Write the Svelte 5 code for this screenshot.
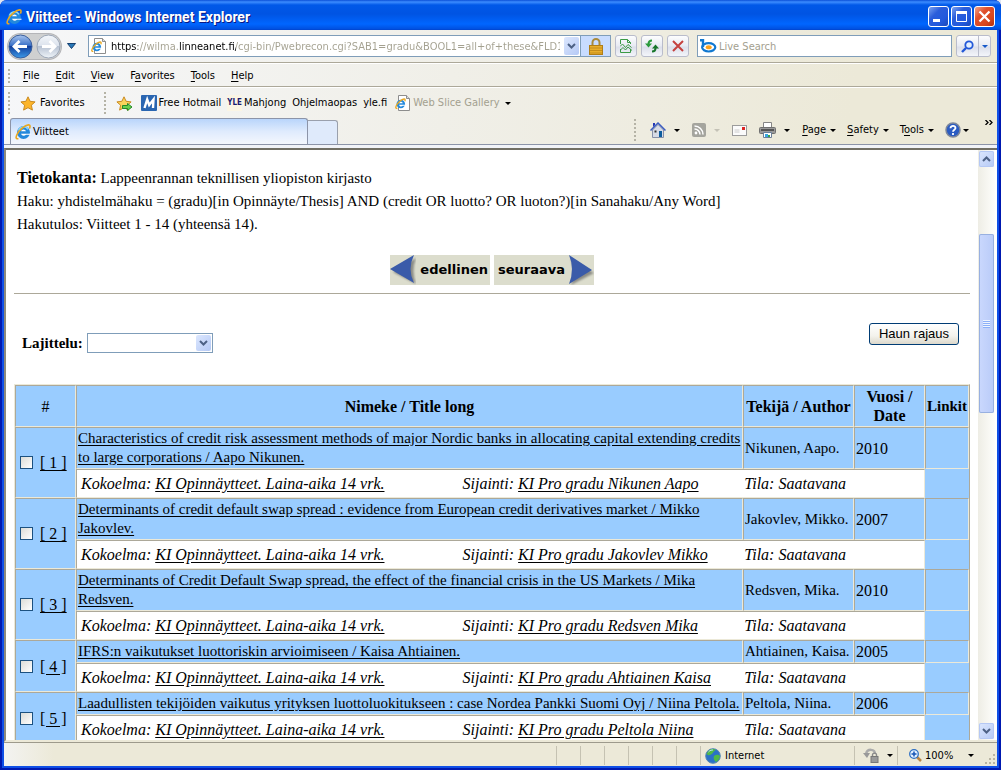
<script>
    let url = $state('https://wilma.linneanet.fi/cgi-bin/Pwebrecon.cgi?SAB1=gradu&BOOL1=all+of+these&FLD1=Opinnayte');
    let search = $state('');
    let sort = $state('');

    const menus = [
        ['', 'F', 'ile'],
        ['', 'E', 'dit'],
        ['', 'V', 'iew'],
        ['F', 'a', 'vorites'],
        ['', 'T', 'ools'],
        ['', 'H', 'elp']
    ];

    const commands = [
        ['', 'P', 'age'],
        ['', 'S', 'afety'],
        ['T', 'o', 'ols']
    ];

    const records = [
        {
            title: 'Characteristics of credit risk assessment methods of major Nordic banks in allocating capital extending credits to large corporations / Aapo Nikunen.',
            author: 'Nikunen, Aapo.',
            year: 2010,
            place: 'Nikunen Aapo'
        },
        {
            title: 'Determinants of credit default swap spread : evidence from European credit derivatives market / Mikko Jakovlev.',
            author: 'Jakovlev, Mikko.',
            year: 2007,
            place: 'Jakovlev Mikko'
        },
        {
            title: 'Determinants of Credit Default Swap spread, the effect of the financial crisis in the US Markets / Mika Redsven.',
            author: 'Redsven, Mika.',
            year: 2010,
            place: 'Redsven Mika'
        },
        {
            title: 'IFRS:n vaikutukset luottoriskin arvioimiseen / Kaisa Ahtiainen.',
            author: 'Ahtiainen, Kaisa.',
            year: 2005,
            place: 'Ahtiainen Kaisa'
        },
        {
            title: 'Laadullisten tekijöiden vaikutus yrityksen luottoluokitukseen : case Nordea Pankki Suomi Oyj / Niina Peltola.',
            author: 'Peltola, Niina.',
            year: 2006,
            place: 'Peltola Niina'
        }
    ];
</script>

{#snippet ie()}
    <svg width="16" height="16" viewBox="0 0 16 16" aria-hidden="true">
        <circle cx="8.500" cy="8.500" r="6.500" fill="#2389dc" />
        <path d="M3.500 6.500a5.300 5.300 0 0 1 9.500-1.200" fill="none" stroke="#8ad6fa" stroke-width="1.500" />
        <path d="M6 7.200a2.600 2.200 0 0 1 5 0z" fill="#fff" />
        <path d="M6 9.700h9.500v1H11c-1.500 1.500-4.300 1.300-5-1z" fill="#fff" />
        <path d="M3.400 14.600c-2.400.8-3-.8-1.300-4.200C4.200 6 9.800 1.200 13.400.9c2.100-.1 1.900 1.700 1 3.700" fill="none" stroke="#e9a820" stroke-width="1.600" />
    </svg>
{/snippet}

{#snippet iePage()}
    <svg width="16" height="16" viewBox="0 0 16 16" aria-hidden="true">
        <path d="M3.500.5h8l3 3v12h-11z" fill="#fff" stroke="#8d8d8d" />
        <path d="M11.500.5v3h3" fill="#ddd" stroke="#8d8d8d" />
        <circle cx="5.800" cy="9" r="4.300" fill="#2389dc" />
        <path d="M4 8.200a2 2 0 0 1 3.800 0zM4 9.700h6.500v1H7.800c-1.300 1.200-3.300 1-3.800-1z" fill="#fff" />
        <path d="M2.300 13.300c-1.600.5-2-.6-.9-2.800C3 7.500 6.500 4.300 9 4c1.400 0 1.300 1 .8 2.200" fill="none" stroke="#e9a820" stroke-width="1.300" />
    </svg>
{/snippet}

{#snippet caret(color)}
    <svg class="caret" width="6" height="3" viewBox="0 0 6 3" aria-hidden="true"><path d="M0 0h6L3 3z" fill={color} /></svg>
{/snippet}

{#snippet chevron()}
    <svg width="9" height="6" viewBox="0 0 9 6" aria-hidden="true"><path d="M1 1l3.500 3.500L8 1" fill="none" stroke="#4d6185" stroke-width="2" /></svg>
{/snippet}

{#snippet mnemonic(parts)}{parts[0]}<u>{parts[1]}</u>{parts[2]}{/snippet}

<div class="window">
    <header class="titlebar">
        {@render ie()}
        <h1>Viitteet - Windows Internet Explorer</h1>
        <button class="win" aria-label="Minimize"><svg width="19" height="19" viewBox="0 0 19 19"><path d="M4 13.500h7" stroke="#fff" stroke-width="3" /></svg></button>
        <button class="win" aria-label="Maximize"><svg width="19" height="19" viewBox="0 0 19 19"><path d="M4.500 5v9.500h10V5" fill="none" stroke="#fff" /><path d="M4 5.500h11" stroke="#fff" stroke-width="3" /></svg></button>
        <button class="win close" aria-label="Close"><svg width="19" height="19" viewBox="0 0 19 19"><path d="M4.500 4.500l10 10M14.500 4.500l-10 10" stroke="#fff" stroke-width="2.300" /></svg></button>
    </header>

    <div class="chrome">
        <div class="nav">
            <div class="travel">
                <button aria-label="Back">
                    <svg width="25" height="25" viewBox="0 0 25 25">
                        <defs>
                            <linearGradient id="back" x2="0" y2="1"><stop offset="0" stop-color="#a9c5ee" /><stop offset=".45" stop-color="#3c72c8" /><stop offset=".5" stop-color="#123f9c" /><stop offset="1" stop-color="#3c9ae8" /></linearGradient>
                        </defs>
                        <circle cx="12.500" cy="12.500" r="11.500" fill="url(#back)" stroke="#3b5f9c" />
                        <path d="M11.500 7l-5.500 5.500 5.500 5.500M7 12.500h12" fill="none" stroke="#fff" stroke-width="2.800" />
                    </svg>
                </button>
                <button aria-label="Forward">
                    <svg width="25" height="25" viewBox="0 0 25 25">
                        <defs>
                            <linearGradient id="fwd" x2="0" y2="1"><stop offset="0" stop-color="#f4f7fb" /><stop offset=".48" stop-color="#dbe2ec" /><stop offset=".5" stop-color="#b7c2d2" /><stop offset="1" stop-color="#f0f5fa" /></linearGradient>
                        </defs>
                        <circle cx="12.500" cy="12.500" r="11.500" fill="url(#fwd)" stroke="#9aa5b5" />
                        <path d="M13.500 7l5.500 5.500-5.500 5.500M18 12.500H6" fill="none" stroke="#fff" stroke-width="2.800" />
                    </svg>
                </button>
            </div>
            <button class="recent" aria-label="Recent pages"><svg width="9" height="6" viewBox="0 0 9 6"><path d="M.5.5h8l-4 5z" fill="#2878b8" stroke="#153f6e" /></svg></button>
            <div class="address">
                {@render iePage()}
                <input type="text" aria-label="Address" bind:value={url} />
                <button class="drop" aria-label="Show addresses">{@render chevron()}</button>
                <button class="lock" aria-label="Security report">
                    <svg width="14" height="17" viewBox="0 0 14 17">
                        <path d="M3.500 8V4.500a3.500 3.500 0 0 1 7 0V8" fill="none" stroke="#a98a3c" stroke-width="2" />
                        <rect x=".5" y="7.500" width="13" height="9" fill="#e8ae2c" stroke="#b07e18" />
                        <path d="M1 10h12M1 12.500h12M1 15h12" stroke="#c48d1c" />
                    </svg>
                </button>
            </div>
            <button class="tool" aria-label="Compatibility view">
                <svg width="12" height="14" viewBox="0 0 12 14"><path d="M.5 5V.5h7l3 3V5M.5 10v3.500h10V10M7.500.5v3h3" fill="none" stroke="#3b9a46" /><path d="M0 7.500L2.500 5l3 3.500L8 5.500l3.500 3M0 11.500l3-3 2.500 2.500 2.500-3 4 3.500" fill="none" stroke="#3b9a46" /></svg>
            </button>
            <button class="tool" aria-label="Refresh">
                <svg width="14" height="14" viewBox="0 0 14 14"><path d="M7 1.500C4.500 1.500 3.500 3 3.500 5" fill="none" stroke="#2b9a3c" stroke-width="2" /><path d="M0 4.500h7L3.500 8.500z" fill="#2b9a3c" /><path d="M7 12.500c2.500 0 3.500-1.500 3.500-3.500" fill="none" stroke="#16752a" stroke-width="2" /><path d="M7 9.500h7L10.500 5.500z" fill="#16752a" /></svg>
            </button>
            <button class="tool" aria-label="Stop">
                <svg width="12" height="12" viewBox="0 0 12 12"><path d="M1 1l10 10M11 1L1 11" stroke="#c5413f" stroke-width="2" /></svg>
            </button>
            <div class="search">
                <svg width="17" height="14" viewBox="0 0 17 14" aria-hidden="true"><path d="M0 1.200h3V8" fill="none" stroke="#1078d0" stroke-width="2.400" /><ellipse cx="8.700" cy="8.300" rx="6.600" ry="4.200" fill="none" stroke="#1078d0" stroke-width="2.200" /><ellipse cx="8.700" cy="8.300" rx="3" ry="2" fill="#f9a11b" /></svg>
                <input type="text" aria-label="Live Search" placeholder="Live Search" bind:value={search} />
            </div>
            <div class="go">
                <button aria-label="Search"><svg width="13" height="13" viewBox="0 0 13 13"><circle cx="8" cy="5" r="3.700" fill="#e3efff" stroke="#2358d8" stroke-width="1.800" /><path d="M5 8l-4 4" stroke="#2358d8" stroke-width="2.400" /></svg></button>
                <button aria-label="Search options">{@render caret('#1659c9')}</button>
            </div>
        </div>

        <nav class="menubar">
            <span class="grip"></span>
            {#each menus as menu}
                <button>{@render mnemonic(menu)}</button>
            {/each}
        </nav>

        <div class="favbar">
            <span class="grip"></span>
            <button class="fav">
                <svg width="16" height="15" viewBox="0 0 16 15"><path d="M8 .8l2.100 4.500 5 .6-3.700 3.300 1 4.900L8 11.700l-4.400 2.400 1-4.900L.9 5.900l5-.6z" fill="#fcb52b" stroke="#c98a22" /></svg>
                Favorites
            </button>
            <span class="grip"></span>
            <button aria-label="Add to Favorites Bar">
                <svg width="17" height="15" viewBox="0 0 17 15"><path d="M8 .8l2.100 4.500 5 .6-3.700 3.300 1 4.900L8 11.700l-4.400 2.400 1-4.900L.9 5.900l5-.6z" fill="#fcd35c" stroke="#c98a22" /><path d="M6.500 9.500h5v-2l4.500 3.500-4.500 3.500v-2h-5z" fill="#6bd04e" stroke="#258a2b" /></svg>
            </button>
            <a href="#hotmail">
                <svg width="16" height="16" viewBox="0 0 16 16" aria-hidden="true"><rect width="16" height="16" rx="1" fill="#2a66b1" /><path d="M3.500 13L6.200 4.500l2 5.500 4.300-5.500-.5 8.500" fill="none" stroke="#fff" stroke-width="2.400" /></svg>
                Free Hotmail
            </a>
            <a href="#mahjong"><b class="yle">YLE</b>Mahjong</a>
            <a href="#opas">Ohjelmaopas</a>
            <a href="#yle">yle.fi</a>
            <button class="slice">{@render iePage()}Web Slice Gallery {@render caret('#000')}</button>
        </div>

        <div class="tabrow">
            <button class="tab">{@render ie()}Viitteet</button>
            <button class="newtab" aria-label="New tab"></button>
            <div class="commands">
                <span class="grip"></span>
                <button class="home" aria-label="Home">
                    <svg width="16" height="16" viewBox="0 0 16 16"><path d="M2.500 8v7.500h11V8L8 2.500z" fill="#d7dbe6" stroke="#8790a8" /><path d="M.5 8.500L8 1l7.500 7.500" fill="none" stroke="#3c5cc0" stroke-width="1.500" /><path d="M3 1v4l2-2V1z" fill="#2336b4" /><path d="M9 9h3v6H9z" fill="#0d5c9e" /><path d="M4.500 8.500h2v2h-2z" fill="#333" /></svg>
                    {@render caret('#000')}
                </button>
                <button aria-label="Feeds">
                    <svg width="14" height="14" viewBox="0 0 14 14"><rect width="14" height="14" rx="2" fill="#a5a59e" /><circle cx="4" cy="10" r="1.400" fill="#fff" /><path d="M2.500 6a5.500 5.500 0 0 1 5.500 5.500M2.500 3A8.500 8.500 0 0 1 11 11.500" fill="none" stroke="#fff" stroke-width="1.500" /></svg>
                    {@render caret('#c4c2b6')}
                </button>
                <button aria-label="Read mail">
                    <svg width="15" height="11" viewBox="0 0 15 11"><rect x=".5" y=".5" width="14" height="10" fill="#fbfbfb" stroke="#9c9c9c" /><path d="M2.500 5h5M2.500 7h5" stroke="#ccc" /><path d="M10 2h3v3h-3z" fill="#dc2525" /></svg>
                </button>
                <button aria-label="Print">
                    <svg width="17" height="16" viewBox="0 0 17 16"><path d="M4.500 6V.5h8V6" fill="#fff" stroke="#858585" /><rect x=".5" y="5.500" width="16" height="6" rx="1" fill="#9a9a9a" stroke="#707070" /><path d="M2 8h13" stroke="#555" stroke-width="2" /><path d="M4.500 10.500h8v5h-8z" fill="#fff" stroke="#6b7f99" /><path d="M6 12h3v3H6z" fill="#3aa5e0" /><path d="M9 13h2v2H9z" fill="#39a347" /></svg>
                    {@render caret('#000')}
                </button>
                {#each commands as command}
                    <button class="word"><span>{@render mnemonic(command)}</span>{@render caret('#000')}</button>
                {/each}
                <button class="help" aria-label="Help">
                    <svg width="16" height="16" viewBox="0 0 16 16"><circle cx="8" cy="8" r="7" fill="#2b5cc2" stroke="#7d879b" stroke-width="1.500" /><path d="M5.500 6.200C5.500 3 10.700 3.200 10.500 6.200 10.300 7.800 8 7.700 8 9.800M8 11v2" fill="none" stroke="#fff" stroke-width="1.800" /></svg>
                    {@render caret('#000')}
                </button>
                <button class="more" aria-label="More commands"><svg width="8" height="5" viewBox="0 0 8 5"><path d="M.5 0L3 2.500.5 5M4.500 0L7 2.500 4.500 5" fill="none" stroke="#000" stroke-width="1.300" /></svg></button>
            </div>
        </div>
    </div>

    <div class="view">
        <main>
            <section class="info">
                <p><b>Tietokanta:</b> Lappeenrannan teknillisen yliopiston kirjasto</p>
                <p>Haku: yhdistelmähaku = (gradu)[in Opinnäyte/Thesis] AND (credit OR luotto? OR luoton?)[in Sanahaku/Any Word]</p>
                <p>Hakutulos: Viitteet 1 - 14 (yhteensä 14).</p>
            </section>

            <div class="pager">
                <a href="#prev">
                    <svg width="26" height="30" viewBox="0 0 26 30" aria-hidden="true"><path class="shade" d="M3 17L26 3q-5 13 0 26z" /><path d="M0 14L24 0q-7 14 0 28z" fill="#3a5ba9" /></svg>
                    edellinen
                </a>
                <a href="#next">
                    seuraava
                    <svg width="26" height="30" viewBox="0 0 26 30" aria-hidden="true"><path class="shade" d="M26 18L3 4q5 13 0 26z" /><path d="M24 15L1 0q6 14 0 29z" fill="#3a5ba9" /></svg>
                </a>
            </div>

            <hr />

            <form class="sorting">
                <label for="sort">Lajittelu:</label>
                <span class="select">
                    <select id="sort" bind:value={sort}>
                        <option value=""></option>
                        <option value="author">Tekijä</option>
                        <option value="title">Nimeke</option>
                    </select>
                    <span class="drop">{@render chevron()}</span>
                </span>
                <button type="button">Haun rajaus</button>
            </form>

            <table>
                <colgroup>
                    <col class="c-num" />
                    <col />
                    <col class="c-author" />
                    <col class="c-year" />
                    <col class="c-link" />
                </colgroup>
                <thead>
                    <tr>
                        <th class="plain">#</th>
                        <th>Nimeke / Title long</th>
                        <th>Tekijä / Author</th>
                        <th>Vuosi / Date</th>
                        <th class="small">Linkit</th>
                    </tr>
                </thead>
                <tbody>
                    {#each records as record, i}
                        <tr>
                            <td rowspan="2">
                                <div class="pick">
                                    <input type="checkbox" aria-label="Viite {i + 1}" />
                                    <a href="#record{i + 1}">[ {i + 1} ]</a>
                                </div>
                            </td>
                            <td><a href="#record{i + 1}">{record.title}</a></td>
                            <td>{record.author}</td>
                            <td class="year">{record.year}</td>
                            <td></td>
                        </tr>
                        <tr>
                            <td class="holding" colspan="3">
                                <div>
                                    <span>Kokoelma: <a href="#collection">KI Opinnäytteet. Laina-aika 14 vrk.</a></span>
                                    <span>Sijainti: <a href="#place{i + 1}">KI Pro gradu {record.place}</a></span>
                                    <span>Tila: Saatavana</span>
                                </div>
                            </td>
                            <td class="blank"></td>
                        </tr>
                    {/each}
                </tbody>
            </table>
        </main>

        <div class="scrollbar">
            <button class="up" aria-label="Scroll up">{@render chevron()}</button>
            <span class="before"></span>
            <span class="thumb"><i></i></span>
            <span class="after"></span>
            <button aria-label="Scroll down">{@render chevron()}</button>
        </div>
    </div>

    <footer>
        {#each Array(6) as _}
            <span class="pane"></span>
        {/each}
        <span class="zone">
            <svg width="16" height="16" viewBox="0 0 16 16" aria-hidden="true"><circle cx="8" cy="8" r="7.300" fill="#2a72c8" stroke="#5587b4" /><path d="M3 3.500C6 0 10 1 10.500 2 8 3.500 8.500 5 6 6.500 4 8 2.500 7 1.500 6zM9 8c2.500-2 5-1 6 0-.5 3-2 5-4 6-2-1.500-3-4-2-6z" fill="#4fb948" /><path d="M3.500 4C5 2 7 2 8 2" fill="none" stroke="#bfe4ff" /></svg>
            Internet
        </span>
        <button class="protect" aria-label="Protected mode">
            <svg width="17" height="15" viewBox="0 0 17 15"><path d="M12 6C12 1 4.500 0 3 6" fill="none" stroke="#aaa" stroke-width="2.500" /><path d="M0 5h7l-3 5z" fill="#999" /><path d="M9.500 9V7c0-2.500 4-2.500 4 0v2" fill="none" stroke="#888" stroke-width="1.400" /><rect x="8" y="8.500" width="7" height="6" fill="#999" stroke="#777" /></svg>
            {@render caret('#000')}
        </button>
        <button class="zoom">
            <svg width="13" height="13" viewBox="0 0 13 13" aria-hidden="true"><path d="M8 8l4 4" stroke="#b98545" stroke-width="2.500" /><circle cx="5" cy="5" r="4.300" fill="#e4f1ff" stroke="#2c6fc4" stroke-width="1.300" /><path d="M5 2.500v5M2.500 5h5" stroke="#1353b5" stroke-width="1.500" /></svg>
            <span>100%</span>
            {@render caret('#000')}
        </button>
        <svg class="corner" width="12" height="12" viewBox="0 0 12 12" aria-hidden="true"><path d="M9 0h2v2H9zM5 4h2v2H5zM9 4h2v2H9zM1 8h2v2H1zM5 8h2v2H5zM9 8h2v2H9z" fill="#b8b4a2" /></svg>
    </footer>
</div>

<style>
    :global(body) {
        background: #dfe6f2;
    }

    .window {
        display: flex;
        flex-direction: column;
        box-sizing: border-box;
        height: 100vh;
        overflow: hidden;
        padding: 0 4px 4px;
        border-radius: 7px 7px 0 0;
        background: #0f4fe6;
        box-shadow: inset 2px -2px #0019b0, inset -2px 0 #0019b0;
        font: 11px/14px "DejaVu Sans Condensed", "DejaVu Sans", sans-serif;
        color: #000;
    }

    button {
        margin: 0;
        padding: 0;
        border: 0;
        background: none;
        font: inherit;
        color: inherit;
    }

    button,
    a,
    span {
        white-space: nowrap;
    }

    svg {
        display: block;
        flex: none;
    }

    u {
        text-underline-offset: 2px;
    }

    /* title bar */
    .titlebar {
        display: flex;
        flex: none;
        align-items: center;
        gap: 2px;
        height: 30px;
        margin: 0 -4px;
        padding: 3px 6px 0;
        box-sizing: border-box;
        background: linear-gradient(#0a4fd8, #3c8cff 2px, #0058e8 5px, #0054e3 14px, #0066ff 24px, #0050e0 29px, #0040c8);
        color: #fff;
    }

    h1 {
        flex: 1;
        margin: 0 0 0 2px;
        font: bold 14px/18px Roboto, sans-serif;
        text-shadow: 1px 1px #0a1883;
    }

    .win {
        border: 1px solid #fff;
        border-radius: 3px;
        background: linear-gradient(135deg, #7ba2f0, #2b5ddb 35%, #2259dd 70%, #1b48b8);
    }

    .close {
        background: linear-gradient(135deg, #f0a58c, #e0502c 35%, #d8481e 70%, #b33010);
    }

    /* toolbars */
    .chrome {
        flex: none;
        border-bottom: 3px solid #f1f3f8;
        background: linear-gradient(100deg, #f6f7f9, #f0efe8 45%, #ece9d8 85%);
    }

    .nav {
        display: flex;
        align-items: center;
        height: 32px;
        padding: 0 6px 0 4px;
        border-bottom: 1px solid #aca899;
    }

    .travel {
        display: flex;
        gap: 3px;
        border-radius: 14px;
        background: #cfd0d0;
        box-shadow: 0 0 0 1px #b4b5b8;
    }

    .recent {
        margin: 0 12px 0 6px;
    }

    .address,
    .search {
        display: flex;
        align-items: center;
        box-sizing: border-box;
        height: 22px;
        border: 1px solid #7f9db9;
        background: #fff;
    }

    .address {
        flex: 1;
        min-width: 0;
        margin-right: 4px;
        padding-left: 2px;
    }

    .address input,
    .search input {
        flex: 1;
        min-width: 0;
        height: 18px;
        padding: 0;
        border: 0;
        outline: 0;
        font: inherit;
    }

    .address input {
        margin: 0 4px;
        background: linear-gradient(to right, #000 27px, #a3a08f 27px 67px, #000 67px 125px, #a3a08f 125px);
        background-clip: text;
        -webkit-background-clip: text;
        color: transparent;
    }

    .search {
        flex: 0 1 255px;
        margin: 0 4px 0 8px;
        padding-left: 2px;
    }

    .search input {
        margin-left: 2px;
    }

    .search input::placeholder {
        color: #a3a08f;
    }

    .drop {
        display: flex;
        align-items: center;
        justify-content: center;
        width: 15px;
        height: 18px;
        border-radius: 2px;
        background: linear-gradient(135deg, #dce7fe, #b5c9f5);
    }

    .lock {
        display: flex;
        align-items: center;
        justify-content: center;
        width: 30px;
        height: 20px;
        margin-left: 1px;
        border-left: 1px solid #7f9db9;
        background: #c8dcff;
    }

    .tool,
    .go {
        display: flex;
        align-items: center;
        justify-content: center;
        box-sizing: border-box;
        height: 22px;
        border: 1px solid #b9bccb;
        border-radius: 3px;
        background: linear-gradient(#fdfdfe, #e7eaf2 50%, #dcdfea 55%, #f3f5fa);
    }

    .tool {
        width: 22px;
        margin-right: 4px;
    }

    .tool:nth-last-of-type(1) {
        margin-right: 0;
    }

    .go button {
        display: flex;
        align-items: center;
        justify-content: center;
        width: 21px;
        height: 20px;
    }

    .go button + button {
        width: 12px;
        border-left: 1px solid #b9bccb;
    }

    .grip {
        width: 2px;
        height: 14px;
        background: repeating-linear-gradient(#b5b3a6 0 2px, transparent 2px 4px);
    }

    .menubar {
        display: flex;
        align-items: center;
        gap: 16px;
        height: 20px;
        padding: 2px 0 0 4px;
        border-top: 1px solid #fff;
        border-bottom: 1px solid #aca899;
    }

    .menubar .grip {
        margin-right: -3px;
    }

    .favbar {
        display: flex;
        align-items: center;
        height: 30px;
        padding-left: 4px;
        border-top: 1px solid #fff;
    }

    .favbar .grip,
    .commands .grip {
        height: 22px;
    }

    .favbar a,
    .favbar button {
        display: flex;
        align-items: center;
        gap: 2px;
        margin-left: 8px;
        color: #000;
        text-decoration: none;
    }

    .favbar .fav {
        gap: 4px;
        margin: 0 19px 0 10px;
    }

    .favbar .grip + button:not(.fav) {
        margin-left: 10px;
    }

    .favbar a + a {
        margin-left: 6px;
    }

    .yle {
        background: #fbf5e4;
        font-size: 8px;
        line-height: 16px;
        color: #1c1c70;
    }

    .favbar .slice {
        color: #a3a08f;
    }

    .slice .caret {
        margin-left: 3px;
    }

    /* tabs and command bar */
    .tabrow {
        display: flex;
        align-items: flex-end;
        height: 26px;
        padding-left: 6px;
        border-bottom: 1px solid #8c94a8;
    }

    .tab {
        display: flex;
        align-items: center;
        flex: 0 1 298px;
        height: 26px;
        padding-left: 4px;
        gap: 2px;
        border: 1px solid #8c94a8;
        border-bottom: 0;
        border-radius: 3px 3px 0 0;
        background: linear-gradient(#b9d5fb, #dfebfd 50%, #f4f7fd);
    }

    .newtab {
        width: 30px;
        height: 24px;
        border: 1px solid #9aa0ac;
        border-left: 0;
        border-bottom: 0;
        border-radius: 0 3px 0 0;
        background: #dfeafb;
    }

    .commands {
        display: flex;
        align-items: center;
        height: 28px;
        margin-left: auto;
        padding-right: 4px;
    }

    .commands button {
        display: flex;
        align-items: center;
        gap: 8px;
        margin-right: 12px;
    }

    .commands .home {
        margin-left: 14px;
    }

    .commands .word {
        gap: 4px;
        margin-right: 11px;
    }

    .commands .help {
        gap: 2px;
        margin-right: 16px;
    }

    .commands .more {
        align-self: flex-start;
        margin: 4px 0 0;
    }

    /* page */
    .view {
        display: flex;
        flex: 1;
        min-height: 0;
        padding-right: 2px;
        border-top: 2px solid #716f64;
        border-left: 2px solid #8c897c;
        border-bottom: 2px solid #ece9d8;
        background: #fff;
    }

    main {
        flex: 1;
        min-width: 0;
        overflow: hidden;
        padding: 16px 8px 0;
        font: 15px/19px "Liberation Serif", serif;
    }

    .info {
        padding-left: 3px;
    }

    .info p {
        margin: 0;
        line-height: 23px;
    }

    .info b {
        font-size: 16px;
    }

    .pager {
        display: flex;
        justify-content: center;
        gap: 4px;
        margin-top: 19px;
    }

    .pager a {
        display: flex;
        align-items: center;
        justify-content: space-between;
        width: 98px;
        padding-right: 2px;
        background: #dcddcd;
        font: bold 13px/30px "DejaVu Sans", sans-serif;
        color: #000;
        text-decoration: none;
    }

    .pager a + a {
        padding: 0 0 0 4px;
        width: 96px;
    }

    .shade {
        fill: #555;
        opacity: 0.6;
        filter: blur(1px);
    }

    hr {
        margin: 8px 0 29px;
        border: 0;
        border-top: 1px solid #aca899;
    }

    .sorting {
        display: flex;
        align-items: flex-start;
        height: 61px;
        padding: 0 11px 0 8px;
    }

    .sorting label {
        margin: 11px 4px 0 0;
        font-weight: bold;
    }

    .select {
        position: relative;
        margin-top: 10px;
    }

    select {
        display: block;
        appearance: none;
        width: 126px;
        height: 20px;
        padding: 0 18px 0 4px;
        border: 1px solid #7f9db9;
        border-radius: 0;
        background: #fff;
    }

    .select .drop {
        position: absolute;
        top: 2px;
        right: 2px;
        height: 16px;
        pointer-events: none;
    }

    .sorting button {
        height: 22px;
        margin-left: auto;
        padding: 0 9px;
        border: 1px solid #003c74;
        border-radius: 3px;
        background: linear-gradient(#fff, #f3f2ec 60%, #dcd8cb);
        font: 13px/20px "Liberation Sans", sans-serif;
    }

    table {
        width: 100%;
        table-layout: fixed;
        border: 1px solid;
        border-color: #ece9d8 #aca899 #aca899 #ece9d8;
        border-spacing: 0;
    }

    .c-num {
        width: 61px;
    }

    .c-author {
        width: 111px;
    }

    .c-year {
        width: 71px;
    }

    .c-link {
        width: 44px;
    }

    th,
    td {
        padding: 1px;
        border: 1px solid;
        border-color: #aca899 #ece9d8 #ece9d8 #aca899;
        background: #99ccff;
        text-align: left;
    }

    th {
        font-size: 16px;
        text-align: center;
    }

    .small {
        font-size: 15px;
    }

    .plain {
        font-weight: normal;
    }

    td a {
        color: #000;
        text-underline-offset: 2px;
        white-space: normal;
    }

    .year,
    .pick {
        font-size: 16px;
    }

    .pick {
        display: flex;
        align-items: center;
        gap: 7px;
        padding-left: 3px;
    }

    .pick input {
        appearance: none;
        width: 13px;
        height: 13px;
        margin: 0;
        border: 1px solid #1c5180;
        background: linear-gradient(135deg, #dcdcd7, #fff);
    }

    .holding {
        background: #fff;
        font-size: 16px;
        font-style: italic;
    }

    .holding div {
        display: grid;
        grid-template-columns: 382fr 282fr 176fr;
        padding: 3px;
    }

    .blank {
        border: 0;
    }

    /* scroll bar */
    .scrollbar {
        display: flex;
        flex-direction: column;
        width: 15px;
        padding: 1px;
        background: linear-gradient(to right, #eeede5, #fefefb);
    }

    .scrollbar button {
        display: flex;
        flex: none;
        align-items: center;
        justify-content: center;
        width: 15px;
        height: 16px;
        border-radius: 2px;
        background: linear-gradient(135deg, #dce7fe, #b5c9f5);
        box-shadow: inset 0 0 0 1px #b5c8f4;
    }

    .up svg {
        transform: rotate(180deg);
    }

    .before {
        flex: 67;
    }

    .thumb {
        display: flex;
        flex: 179;
        align-items: center;
        justify-content: center;
        border-radius: 2px;
        background: linear-gradient(to right, #cad8fd, #b9cbf8);
        box-shadow: inset 0 0 0 1px #98b0e0;
    }

    .thumb i {
        width: 7px;
        height: 8px;
        background: repeating-linear-gradient(#eef4fe 0 1px, #8cb0f8 1px 2px);
    }

    .after {
        flex: 310;
    }

    /* status bar */
    footer {
        display: flex;
        flex: none;
        align-items: center;
        justify-content: flex-end;
        height: 21px;
        padding-top: 2px;
        border-top: 1px solid #9d9a8c;
        background: linear-gradient(to right, #f3f3f1, #ece9d8 50px);
    }

    footer > span,
    footer > button {
        display: flex;
        align-items: center;
        box-sizing: border-box;
        height: 19px;
        border-left: 1px solid #c5c2b2;
    }

    .pane {
        width: 24px;
    }

    .zone {
        gap: 4px;
        width: 154px;
        padding-left: 4px;
    }

    .protect {
        gap: 7px;
        width: 43px;
        padding-left: 8px;
    }

    .zoom {
        gap: 3px;
        width: 87px;
        padding-left: 11px;
    }

    .zoom .caret {
        margin-left: auto;
        margin-right: 10px;
    }

    .corner {
        align-self: flex-end;
        margin-right: 1px;
    }
</style>
